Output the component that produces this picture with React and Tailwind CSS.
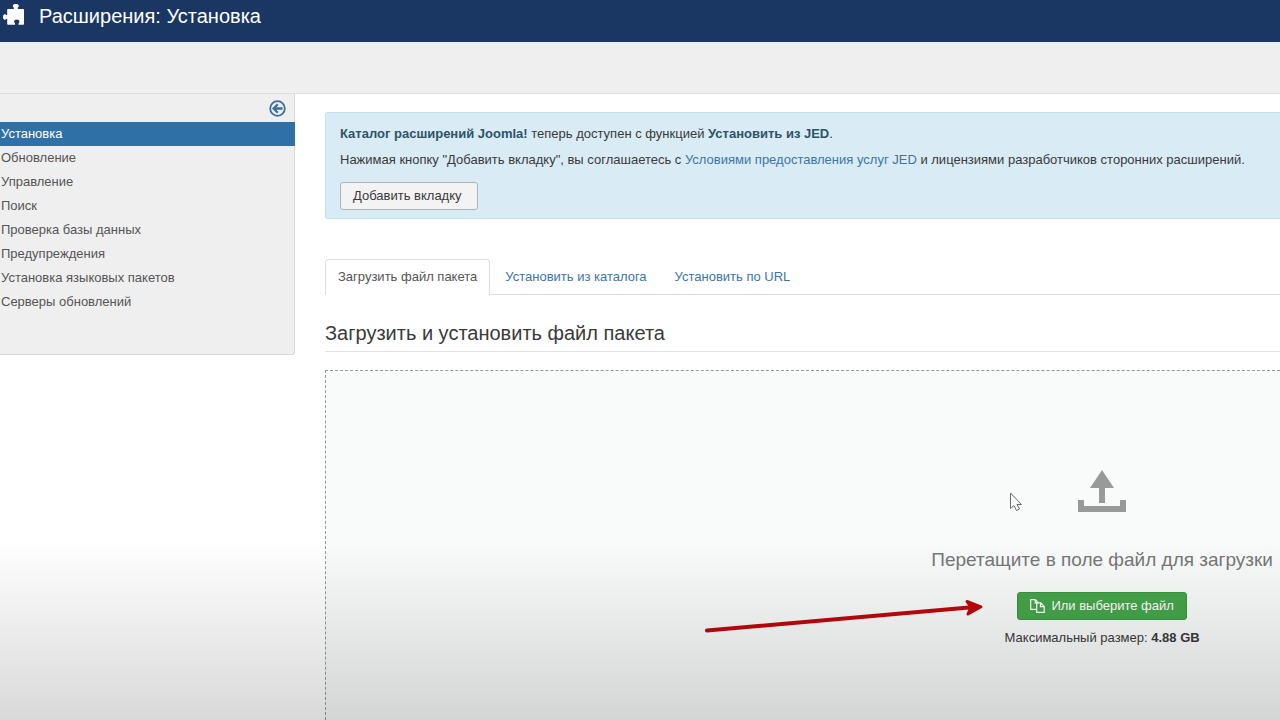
const menuItems = [
    'Установка',
    'Обновление',
    'Управление',
    'Поиск',
    'Проверка базы данных',
    'Предупреждения',
    'Установка языковых пакетов',
    'Серверы обновлений',
];

const tabs = ['Загрузить файл пакета', 'Установить из каталога', 'Установить по URL'];

const PuzzleIcon = () => (
    <svg className="h-6 w-[22px] shrink-0" viewBox="0 0 22 24" fill="white" aria-hidden="true">
        <path d="M5 5h5.800V3.600C10 3 9.800 2.400 9.800 1.800 9.800.6 11 0 12.800 0s3 .6 3 1.800c0 .6-.2 1.200-1 1.800V5h5.400c.5 0 .8.300.8.800V20c0 .5-.3.800-.8.800h-4.700v-1.600c.7-.5 1-1 1-1.700 0-1.200-1.200-2-2.700-2s-2.700.8-2.700 2c0 .7.300 1.200 1 1.700v1.600H5c-.5 0-.8-.3-.8-.8v-5.200H3.600c-.5.700-1 1-1.700 1C.7 15.800 0 14.700 0 13s.7-2.800 1.900-2.800c.7 0 1.200.300 1.700 1h.6V5.800c0-.5.300-.8.800-.8z" />
    </svg>
);

const BackIcon = () => (
    <svg className="h-[17px] w-[17px]" viewBox="0 0 17 17" fill="none" stroke="#3a6f9f" strokeWidth="2" aria-hidden="true">
        <circle cx="8.500" cy="8.500" r="7.300" strokeWidth="1.800" />
        <path d="M13.500 8.500H5M8.800 4.300L4.600 8.500l4.200 4.200" strokeWidth="2.300" />
    </svg>
);

const UploadIcon = () => (
    <svg className="h-[42px] w-[48px]" viewBox="0 0 48 42" fill="#999999" aria-hidden="true">
        <path d="M24 0l12 18h-9v15h-6V18h-9z" />
        <path d="M0 30h6v6h36v-6h6v12H0z" />
    </svg>
);

const CopyIcon = () => (
    <svg className="h-[14px] w-[15px]" viewBox="0 0 15 14" fill="none" stroke="white" strokeWidth="1.200" aria-hidden="true">
        <path d="M6.500 10.400H.7V.7h4.600l2.900 3M5.200.7v3.200h3" />
        <path d="M6.700 3.900h4l3.500 3.500v5.900H6.700zM10.500 4v3.600h3.600" />
    </svg>
);

const RedArrow = () => (
    <svg className="pointer-events-none absolute right-[297px] top-[226px] h-[38px] w-[280px]" viewBox="0 0 280 38" fill="none" stroke="#bd080c" strokeLinecap="round" strokeLinejoin="round" aria-hidden="true">
        <path d="M4 33.500L266 10.500" strokeWidth="4" />
        <path d="M264 4.500L278 9.800L265 17L268 10.200z" fill="#bd080c" strokeWidth="3" />
    </svg>
);

const Pointer = () => (
    <svg className="pointer-events-none absolute right-[257px] top-[121px] h-[20px] w-[14px]" viewBox="0 0 14 20" fill="#fcfcfc" stroke="#6b6b70" aria-hidden="true">
        <path d="M1.500 1v15.500l3.500-3 2.500 5 3-1.500-2.500-4.500h4.500z" />
    </svg>
);

const Sidebar = () => (
    <aside className="h-[261px] w-[295px] shrink-0 rounded-br-[3px] border-b border-r border-[#d8d8d8] bg-[#efefef]">
        <div className="flex h-7 items-center justify-end pr-2">
            <button type="button" aria-label="Скрыть боковую панель">
                <BackIcon />
            </button>
        </div>
        <nav className="-mr-px">
            {menuItems.map((item, i) => (
                <a
                    key={item}
                    href="#"
                    className={i === 0 ? 'block bg-[#2f71a7] pl-px leading-6 text-white' : 'block pl-px leading-6 text-[#555555]'}
                >
                    {item}
                </a>
            ))}
        </nav>
    </aside>
);

const App = () => {
    return (
        <div className="relative flex min-h-screen flex-col overflow-hidden bg-white font-['Liberation_Sans',Arial,sans-serif] text-[13px] leading-[18px] text-[#3a3a3a]">
            <header className="flex items-start bg-[#1a3764] pb-[10px] pl-[3px]">
                <div className="flex h-8 items-center gap-[14px]">
                    <PuzzleIcon />
                    <h1 className="text-[20px] text-white">Расширения: Установка</h1>
                </div>
            </header>
            <div className="h-[52px] border-b border-[#dddddd] bg-[#efefef]" />

            <div className="flex flex-1">
                <Sidebar />
                <main className="flex min-w-0 flex-1 flex-col pl-[30px] pt-[18px]">
                    <section className="rounded-l-[3px] border border-r-0 border-[#bce4ec] bg-[#d9ebf4] pb-2 pl-[14px] pt-3">
                        <p>
                            <strong className="text-[#2d5468]">Каталог расширений Joomla!</strong> теперь доступен с функцией{' '}
                            <strong className="text-[#2d5468]">Установить из JED</strong>.
                        </p>
                        <p className="mt-2">
                            Нажимая кнопку "Добавить вкладку", вы соглашаетесь с{' '}
                            <a href="#" className="text-[#3b76a8]">Условиями предоставления услуг JED</a> и лицензиями разработчиков сторонних расширений.
                        </p>
                        <button type="button" className="mt-[13px] block h-7 rounded-[3px] border border-[#aeb3b6] bg-[#f3f3f3] pl-3 pr-[15px]">
                            Добавить вкладку
                        </button>
                    </section>

                    <div role="tablist" className="mt-10 flex gap-[2px] border-b border-[#dddddd]">
                        {tabs.map((tab, i) => (
                            <button
                                key={tab}
                                type="button"
                                role="tab"
                                aria-selected={i === 0}
                                className={
                                    i === 0
                                        ? '-mb-px rounded-t-[4px] border border-b-0 border-[#dddddd] bg-white px-3 pb-[9px] pt-2 text-[#555555]'
                                        : 'border border-b-0 border-transparent px-3 py-2 text-[#3b76a8]'
                                }
                            >
                                {tab}
                            </button>
                        ))}
                    </div>

                    <h2 className="mt-5 border-b border-[#e2e2e2] text-[20px] leading-9">Загрузить и установить файл пакета</h2>

                    <div className="relative mt-[18px] flex flex-1 justify-end border-l border-t border-dashed border-[#999999] bg-[#f9fbfb] pr-[7px] pt-[99px]">
                        <div className="flex flex-col items-center">
                            <UploadIcon />
                            <p className="mt-8 text-[19px] leading-8 text-[#777777]">Перетащите в поле файл для загрузки</p>
                            <button type="button" className="mt-4 flex h-7 items-center gap-[6px] rounded-[3px] border border-[#3c9440] bg-[#46a54a] px-3 text-white">
                                <CopyIcon />
                                Или выберите файл
                            </button>
                            <p className="mt-[9px]">
                                Максимальный размер: <strong>4.88 GB</strong>
                            </p>
                        </div>
                        <RedArrow />
                        <Pointer />
                    </div>
                </main>
            </div>

            {/* shade over the lower quarter of the page */}
            <div className="pointer-events-none absolute inset-x-0 bottom-0 h-1/4 bg-linear-to-b from-black/0 to-black/15" />
        </div>
    );
};

export default App;
